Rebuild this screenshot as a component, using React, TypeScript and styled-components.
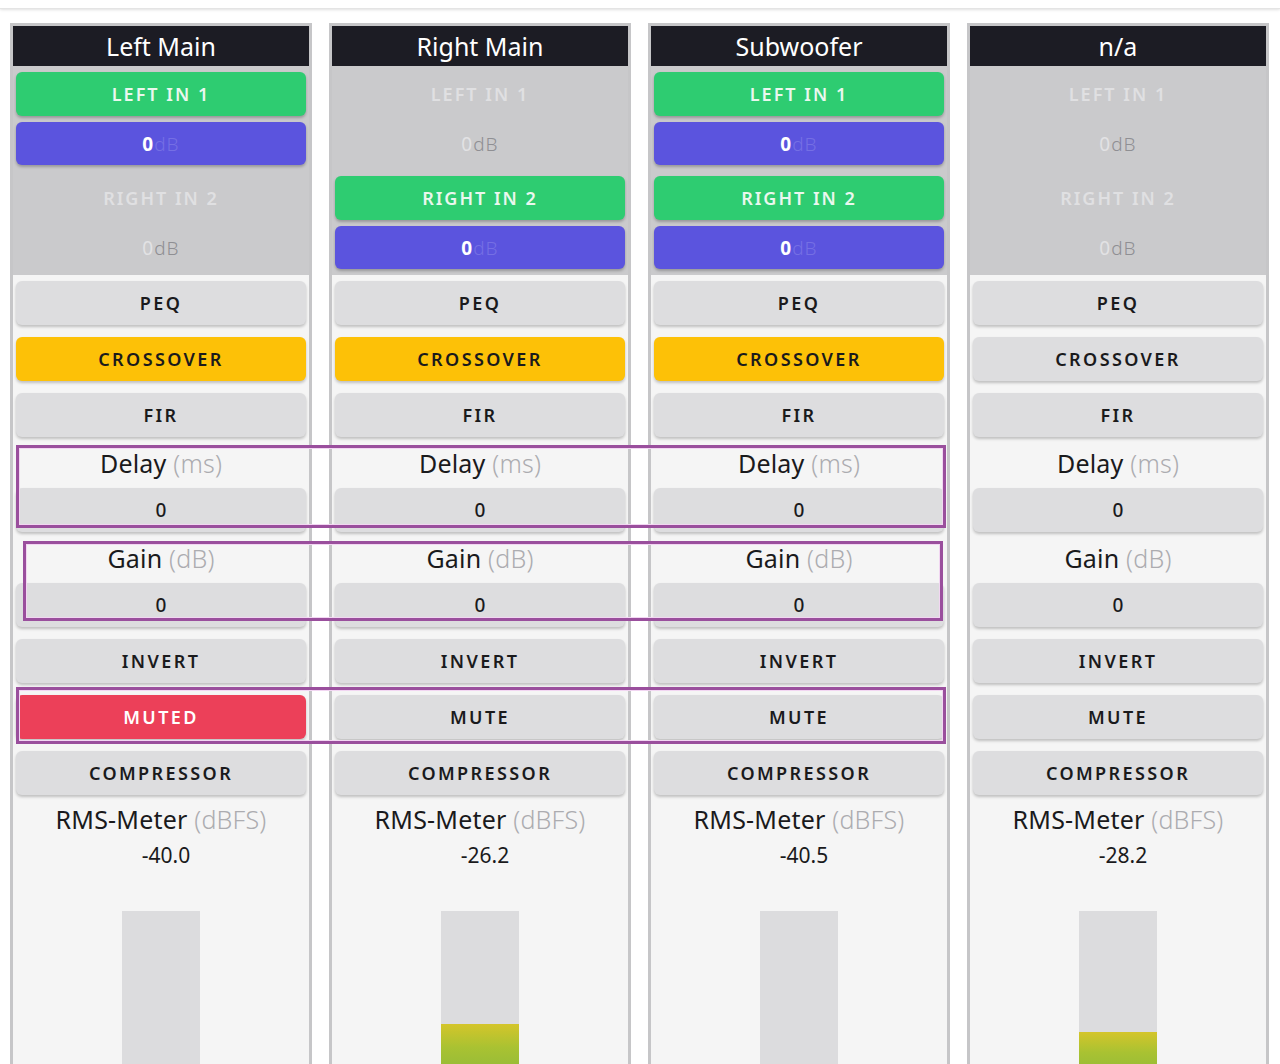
import React from 'react';
import styled, { createGlobalStyle } from 'styled-components';

const GlobalStyle = createGlobalStyle`
  html, body {
    margin: 0;
    padding: 0;
    background: #ffffff;
    font-family: 'Noto Sans', 'DejaVu Sans', sans-serif;
  }
`;

const Page = styled.div`
  position: relative;
  width: 1280px;
  height: 1064px;
  overflow: hidden;
  background: #ffffff;
`;

const TopBar = styled.div`
  height: 8px;
  background: #ffffff;
  border-bottom: 1px solid #e4e4e4;
  box-shadow: 0 1px 3px rgba(0, 0, 0, 0.12);
`;

const Columns = styled.div`
  display: flex;
  gap: 17px;
  padding: 14px 0 0 10px;
`;

const Column = styled.div`
  width: 296px;
  flex: 0 0 296px;
  border: 3px solid #c6c6c8;
  border-bottom: none;
  background: #f5f5f5;
  display: flex;
  flex-direction: column;
  height: 1100px;
`;

const Header = styled.div`
  height: 40px;
  background: #1c1c24;
  color: #ffffff;
  font-size: 25px;
  line-height: 40px;
  text-align: center;
`;

const Inputs = styled.div`
  background: #cacacc;
  padding: 6px 3px 6px;
  display: flex;
  flex-direction: column;
`;

const InputGroup = styled.div`
  display: flex;
  flex-direction: column;
  gap: 6px;
  & + & {
    margin-top: 11px;
  }
`;

const RouteButton = styled.div<{ $on: boolean }>`
  height: 44px;
  border-radius: 6px;
  display: flex;
  align-items: center;
  justify-content: center;
  font-size: 18px;
  font-weight: 600;
  letter-spacing: 2px;
  color: ${(p) => (p.$on ? '#eaf7ee' : '#e0e0e2')};
  background: ${(p) => (p.$on ? '#2ecc71' : 'transparent')};
  box-shadow: ${(p) => (p.$on ? '0 2px 3px rgba(0,0,0,0.25)' : 'none')};
`;

const GainButton = styled.div<{ $on: boolean }>`
  height: 43px;
  border-radius: 6px;
  display: flex;
  align-items: center;
  justify-content: center;
  font-size: 19px;
  letter-spacing: 1px;
  background: ${(p) => (p.$on ? '#5b54de' : 'transparent')};
  box-shadow: ${(p) => (p.$on ? '0 2px 3px rgba(0,0,0,0.25)' : 'none')};
`;

const GainValue = styled.span<{ $on: boolean }>`
  font-weight: ${(p) => (p.$on ? 700 : 400)};
  color: ${(p) => (p.$on ? '#ffffff' : '#e2e2e4')};
`;

const GainUnit = styled.span<{ $on: boolean }>`
  font-weight: 300;
  color: ${(p) => (p.$on ? '#756fe4' : '#8f8f93')};
`;

const Body = styled.div`
  padding: 0 3px;
  display: flex;
  flex-direction: column;
`;

const Button = styled.div<{ $bg?: string; $fg?: string }>`
  height: 44px;
  margin: 6px 0;
  border-radius: 6px;
  display: flex;
  align-items: center;
  justify-content: center;
  font-size: 18px;
  font-weight: 600;
  letter-spacing: 2.4px;
  color: ${(p) => p.$fg || '#1a1a1c'};
  background: ${(p) => p.$bg || '#dddddf'};
  box-shadow: 0 2px 3px rgba(0, 0, 0, 0.22);
`;

const ValueBox = styled(Button)`
  margin: 5px 0 6px;
  font-size: 19px;
  font-weight: 500;
  letter-spacing: 0;
`;

const Label = styled.div<{ $h?: number }>`
  height: ${(p) => p.$h || 40}px;
  line-height: ${(p) => p.$h || 40}px;
  text-align: center;
  font-size: 25px;
  letter-spacing: 0.2px;
  color: #1a1a1c;
`;

const Unit = styled.span`
  color: #acacb0;
  font-weight: 300;
`;

const Reading = styled.div`
  height: 34px;
  line-height: 34px;
  text-align: center;
  font-size: 21px;
  color: #1a1a1c;
  padding-left: 10px;
`;

const Meter = styled.div`
  position: relative;
  width: 78px;
  height: 172px;
  margin: 39px auto 0;
  background: #dcdcde;
  overflow: hidden;
`;

const MeterFill = styled.div`
  position: absolute;
  left: 0;
  right: 0;
  bottom: 0;
  background: linear-gradient(180deg, #d4c52a 0%, #a9c232 40%, #8ab83c 100%);
`;

const Highlight = styled.div`
  position: absolute;
  border: 3px solid #9a4f9d;
  box-shadow: inset 0 0 0 1px #f2d6f2;
  pointer-events: none;
`;

interface Channel {
  name: string;
  left: boolean;
  right: boolean;
  crossover: boolean;
  muted: boolean;
  rms: number;
}

const channels: Channel[] = [
  { name: 'Left Main', left: true, right: false, crossover: true, muted: true, rms: -40.0 },
  { name: 'Right Main', left: false, right: true, crossover: true, muted: false, rms: -26.2 },
  { name: 'Subwoofer', left: true, right: true, crossover: true, muted: false, rms: -40.5 },
  { name: 'n/a', left: false, right: false, crossover: false, muted: false, rms: -28.2 },
];

const meterHeight = (db: number): number => {
  const clamped = Math.max(-40, Math.min(0, db));
  return ((clamped + 40) / 40) * 172;
};

const ChannelStrip: React.FC<{ ch: Channel }> = ({ ch }) => (
  <Column>
    <Header>{ch.name}</Header>
    <Inputs>
      <InputGroup>
        <RouteButton $on={ch.left}>LEFT IN 1</RouteButton>
        <GainButton $on={ch.left}>
          <GainValue $on={ch.left}>0</GainValue>
          <GainUnit $on={ch.left}>dB</GainUnit>
        </GainButton>
      </InputGroup>
      <InputGroup>
        <RouteButton $on={ch.right}>RIGHT IN 2</RouteButton>
        <GainButton $on={ch.right}>
          <GainValue $on={ch.right}>0</GainValue>
          <GainUnit $on={ch.right}>dB</GainUnit>
        </GainButton>
      </InputGroup>
    </Inputs>
    <Body>
      <Button>PEQ</Button>
      <Button $bg={ch.crossover ? '#fdc107' : undefined}>CROSSOVER</Button>
      <Button>FIR</Button>
      <Label>
        Delay <Unit>(ms)</Unit>
      </Label>
      <ValueBox>0</ValueBox>
      <Label>
        Gain <Unit>(dB)</Unit>
      </Label>
      <ValueBox>0</ValueBox>
      <Button>INVERT</Button>
      {ch.muted ? (
        <Button $bg="#ec4059" $fg="#ffffff">MUTED</Button>
      ) : (
        <Button>MUTE</Button>
      )}
      <Button>COMPRESSOR</Button>
      <Label $h={37}>
        RMS-Meter <Unit>(dBFS)</Unit>
      </Label>
      <Reading>{ch.rms.toFixed(1)}</Reading>
      <Meter>
        <MeterFill style={{ height: `${meterHeight(ch.rms)}px` }} />
      </Meter>
    </Body>
  </Column>
);

const App: React.FC = () => (
  <Page>
    <GlobalStyle />
    <TopBar />
    <Columns>
      {channels.map((ch) => (
        <ChannelStrip key={ch.name} ch={ch} />
      ))}
    </Columns>
    <Highlight style={{ left: 16, top: 445, width: 924, height: 77 }} />
    <Highlight style={{ left: 23, top: 541, width: 914, height: 74 }} />
    <Highlight style={{ left: 16, top: 687, width: 924, height: 51 }} />
  </Page>
);

export default App;
